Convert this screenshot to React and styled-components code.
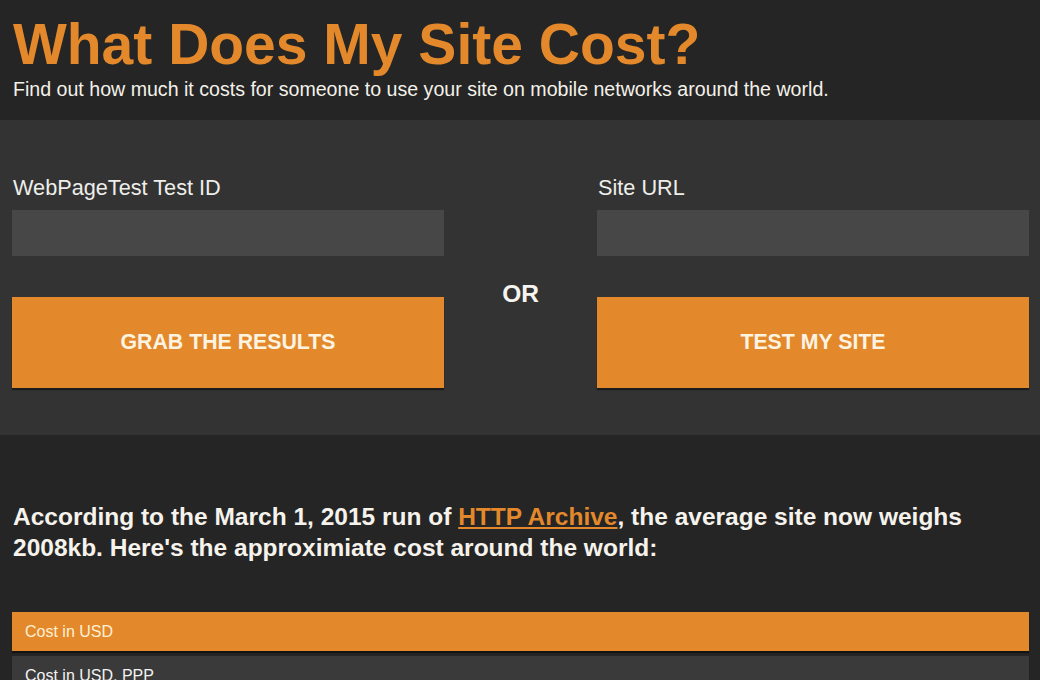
import React from "react";
import styled, { createGlobalStyle } from "styled-components";

const GlobalStyle = createGlobalStyle`
  body {
    margin: 0;
    background: #252525;
    font-family: "Liberation Sans", Arial, sans-serif;
    color: #f4f1ea;
  }
`;

const costRows = [
  { label: "Cost in USD", active: true },
  { label: "Cost in USD, PPP", active: false },
];

export default function App() {
  return (
    <>
      <GlobalStyle />
      <Header>
        <Title>What Does My Site Cost?</Title>
        <Tagline>
          Find out how much it costs for someone to use your site on mobile
          networks around the world.
        </Tagline>
      </Header>

      <FormPanel>
        <FormColumn>
          <FieldLabel>WebPageTest Test ID</FieldLabel>
          <TextInput type="text" />
          <ActionButton>Grab the results</ActionButton>
        </FormColumn>
        <OrLabel>OR</OrLabel>
        <FormColumn>
          <FieldLabel>Site URL</FieldLabel>
          <TextInput type="text" />
          <ActionButton>Test my site</ActionButton>
        </FormColumn>
      </FormPanel>

      <Results>
        <Summary>
          According to the March 1, 2015 run of <Link href="#">HTTP Archive</Link>,
          the average site now weighs 2008kb. Here's the approximiate cost around
          the world:
        </Summary>
        <CostList>
          {costRows.map((row) => (
            <CostRow key={row.label} $active={row.active}>
              {row.label}
            </CostRow>
          ))}
        </CostList>
      </Results>
    </>
  );
}

const Header = styled.header`
  padding: 14px 13px 20px;
`;

const Title = styled.h1`
  margin: 0;
  font-size: 57px;
  line-height: 60px;
  font-weight: bold;
  color: #e3892b;
`;

const Tagline = styled.p`
  margin: 4px 0 0;
  font-size: 19.6px;
  line-height: 22px;
  color: #f4f1ea;
`;

const FormPanel = styled.section`
  display: grid;
  grid-template-columns: 432px 1fr 432px;
  padding: 56px 11px 47px 12px;
  background: #333333;
`;

const FormColumn = styled.div`
  display: flex;
  flex-direction: column;
`;

const FieldLabel = styled.label`
  margin-left: 1px;
  margin-bottom: 10px;
  font-size: 21.7px;
  line-height: 24px;
  color: #eeeeea;
`;

const TextInput = styled.input`
  height: 46px;
  border: none;
  background: #474747;
  padding: 0 12px;
  color: #eee;
  font: inherit;
  outline: none;
`;

const ActionButton = styled.button`
  margin-top: 41px;
  height: 91px;
  border: none;
  background: #e3892b;
  box-shadow: 0 2px 1px rgba(0, 0, 0, 0.45);
  color: #fdf3e1;
  font-family: "Liberation Sans", Arial, sans-serif;
  font-size: 21.3px;
  font-weight: bold;
  text-transform: uppercase;
  cursor: pointer;
`;

const OrLabel = styled.div`
  align-self: start;
  margin-top: 104px;
  text-align: center;
  font-size: 24.5px;
  font-weight: bold;
  color: #f6f4ef;
`;

const Results = styled.section`
  padding: 66px 11px 0 12px;
`;

const Summary = styled.p`
  margin: 0 0 49px 1px;
  font-size: 24.5px;
  line-height: 31px;
  font-weight: bold;
  color: #f6f3ec;
`;

const Link = styled.a`
  color: #e3892b;
  text-decoration: underline;
`;

const CostList = styled.ul`
  list-style: none;
  margin: 0;
  padding: 0;
  display: flex;
  flex-direction: column;
  gap: 5px;
`;

const CostRow = styled.li`
  height: 39px;
  display: flex;
  align-items: center;
  padding: 0 13px;
  font-size: 16px;
  color: ${(p) => (p.$active ? "#fdf0d6" : "#f2f2f2")};
  background: ${(p) => (p.$active ? "#e3892b" : "#3a3a3a")};
  box-shadow: 0 2px 1px rgba(0, 0, 0, 0.45);
`;
